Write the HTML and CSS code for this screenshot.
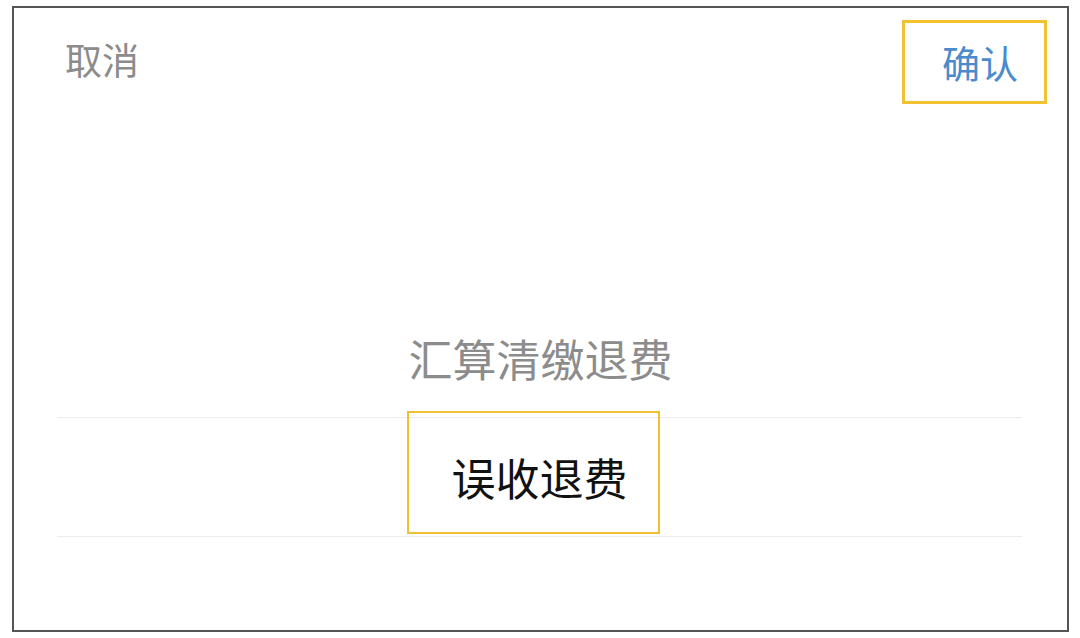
FILE: index.html
```html
<!DOCTYPE html>
<html lang="zh-CN">
<head>
<meta charset="utf-8">
<link rel="stylesheet" href="styles.css">
</head>
<body>
<div class="frame">
  <div class="header">
    <div class="cancel">取消</div>
    <div class="confirm">确认</div>
  </div>
  <div class="picker">
    <div class="row row-dim">汇算清缴退费</div>
    <div class="row row-selected">误收退费<span class="highlight"></span></div>
  </div>
</div>
</body>
</html>
```

FILE: styles.css
```css
html, body {
  margin: 0;
  padding: 0;
  background: #ffffff;
}
body {
  font-family: "Noto Sans CJK SC", "Noto Sans", sans-serif;
  font-weight: 400;
  width: 1080px;
  height: 638px;
  overflow: hidden;
}
.frame {
  position: relative;
  box-sizing: border-box;
  margin: 6px 0 0 12px;
  width: 1057px;
  height: 626px;
  border: 2px solid #555555;
  background: #ffffff;
}
.header {
  display: flex;
  justify-content: space-between;
  align-items: flex-start;
  height: 96px;
  padding: 0 20px 0 51px;
}
.cancel {
  margin-top: 29px;
  font-size: 37px;
  line-height: 44px;
  color: #8c8c8c;
}
.confirm {
  box-sizing: border-box;
  margin-top: 12px;
  width: 145px;
  height: 84px;
  border: 3px solid #f3c233;
  display: flex;
  align-items: center;
  justify-content: center;
  padding-left: 11px;
  font-size: 38px;
  line-height: 44px;
  color: #4a8bcd;
}
.picker {
  margin-top: 195px;
}
.row {
  height: 118px;
  display: flex;
  align-items: center;
  justify-content: center;
  font-size: 44px;
}
.row-dim {
  color: #8c8c8c;
}
.row-selected {
  position: relative;
  margin: 0 45px 0 43px;
  border-top: 1px solid #ececec;
  border-bottom: 1px solid #ececec;
  color: #111111;
}
.highlight {
  position: absolute;
  left: 350px;
  top: -7px;
  width: 253px;
  height: 123px;
  box-sizing: border-box;
  border: 2px solid #f0c030;
}
```
